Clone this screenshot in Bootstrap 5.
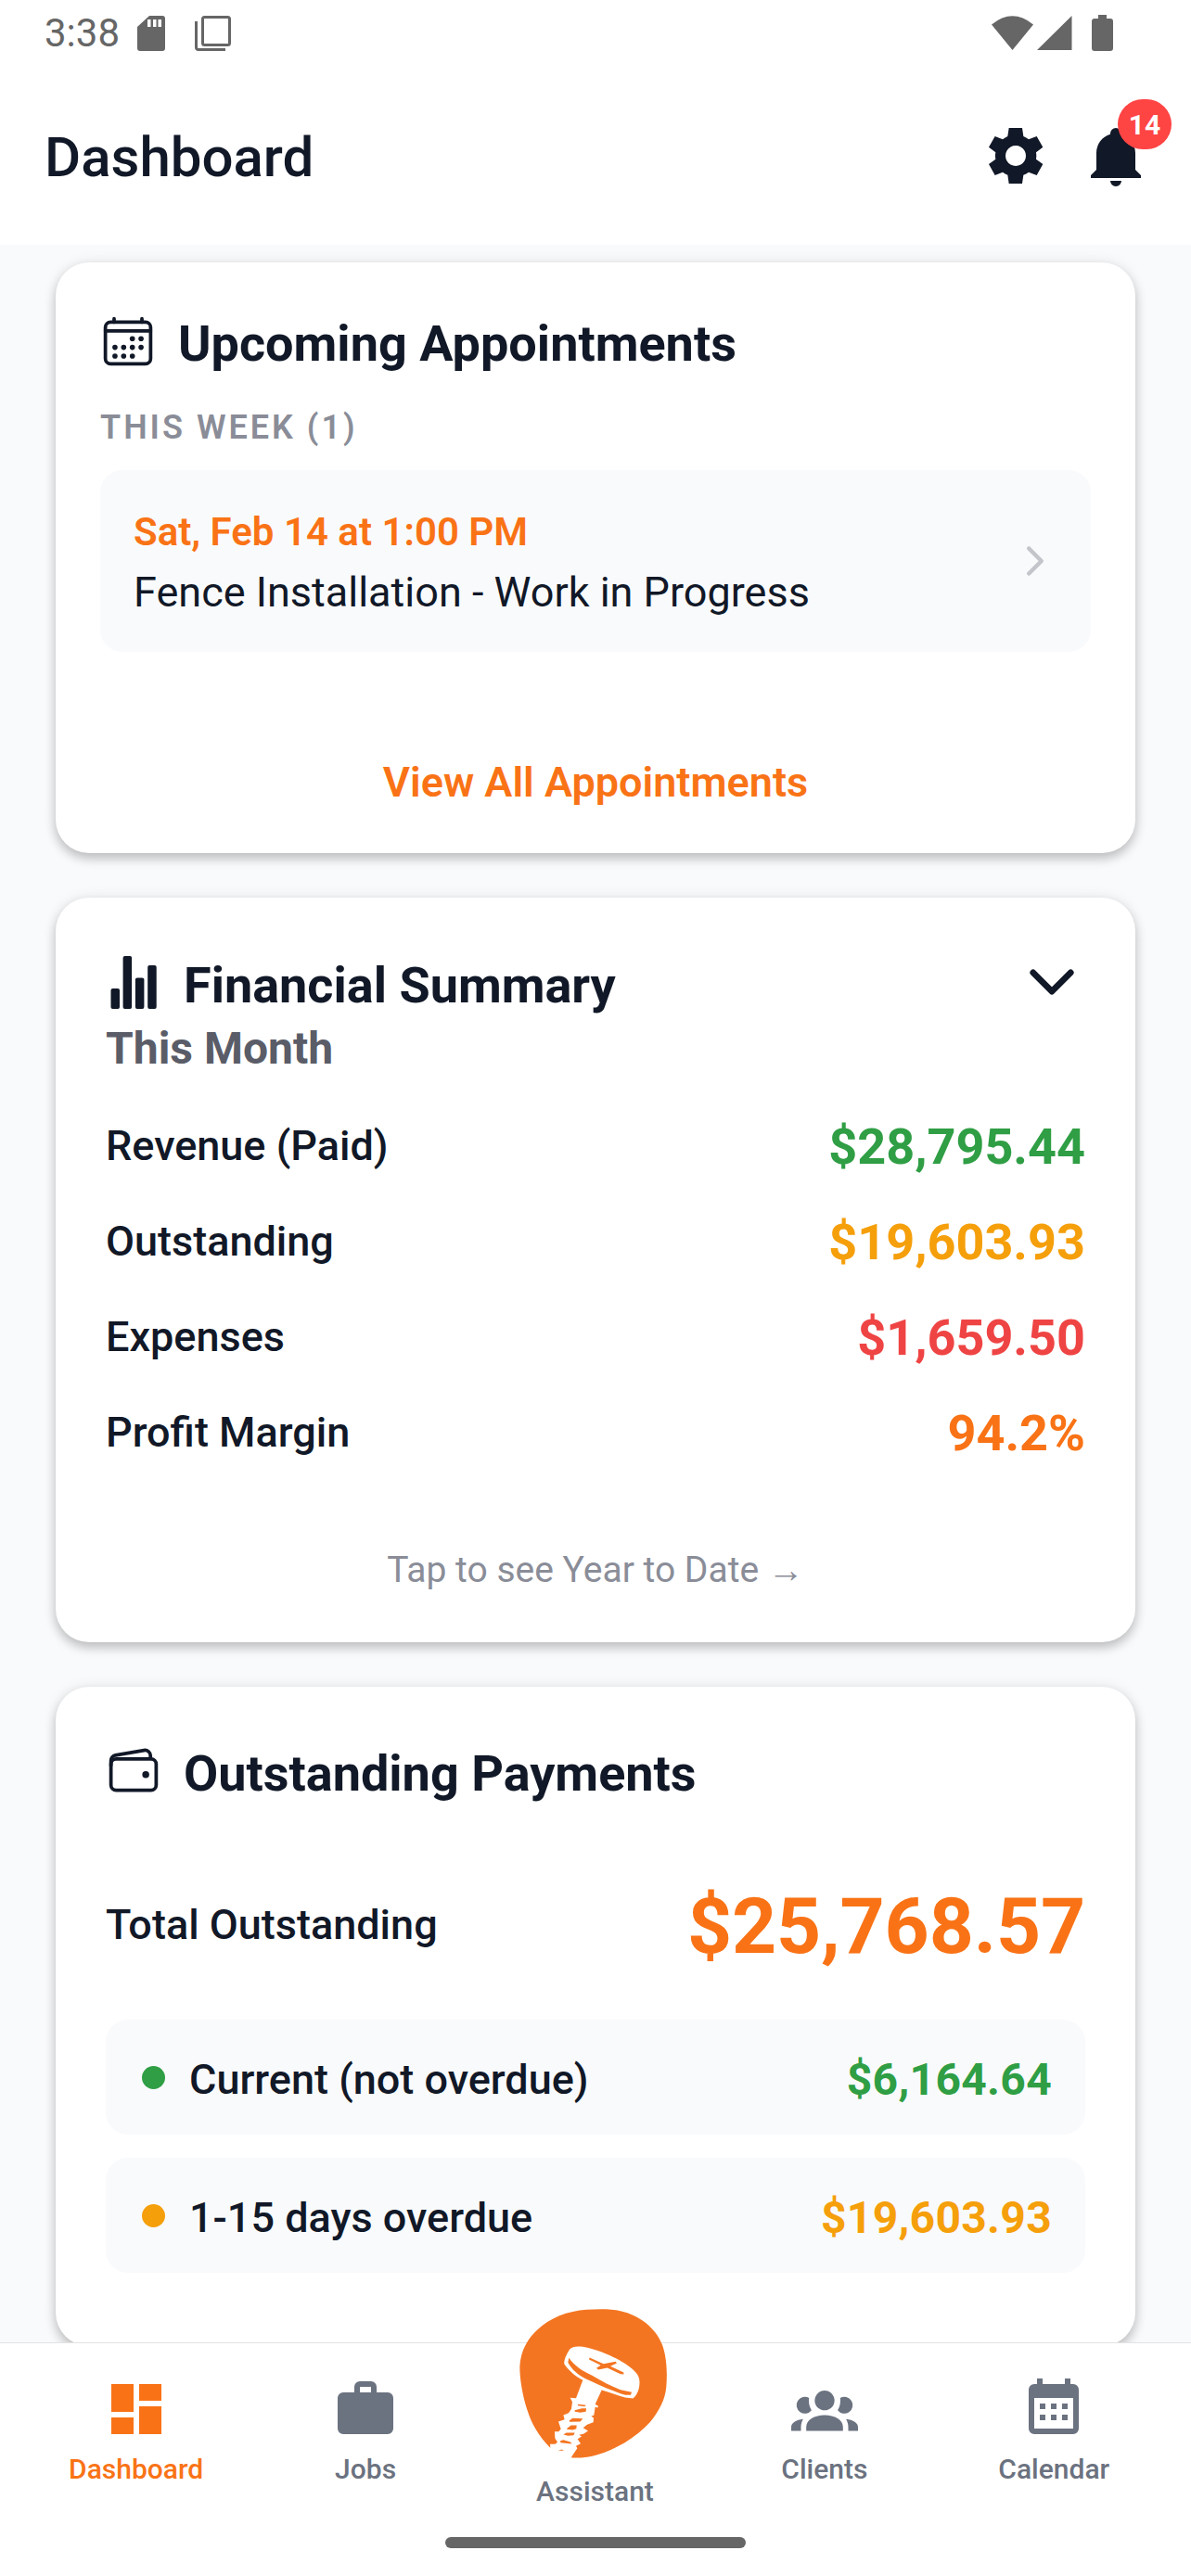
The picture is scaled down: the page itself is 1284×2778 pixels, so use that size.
<!DOCTYPE html>
<html lang="en">
<head>
<meta charset="utf-8">
<meta name="viewport" content="width=device-width, initial-scale=1">
<title>Dashboard</title>
<link href="https://cdn.jsdelivr.net/npm/bootstrap@5.3.0/dist/css/bootstrap.min.css" rel="stylesheet">
<style>
:root{--ink:#111827;--brand:#f97316;--good:#2f9e44;--warn:#f59f0b;--bad:#ef4444;--soft:#f9fafc;--dim:#8a8d98;--nav:#6b7280}
body{font-family:Roboto,"Liberation Sans",sans-serif;color:var(--ink);height:2778px;overflow:hidden;background:#fff}
svg{display:block;flex:none}
.statusbar{height:72px;padding:0 84px 0 48px;color:#666;font-size:42px;line-height:71px}
.status-left{margin:17px 0 0 18px}
.status-right{margin-top:16px}
.topbar{height:192px;padding:0 45px 0 48px}
.topbar h1{font-size:60px;font-weight:500;line-height:72px;padding-top:62px}
.icon-row{padding-top:60px;gap:36px}
.count{top:-25px;left:38px;width:58px;height:54px;border-radius:27px;background:#f44;color:#fff;font-size:30px;font-weight:700;line-height:55px}
main{height:2262px;background:#f9fafc;padding:19px 60px 0;overflow:hidden}
.panel{background:#fff;border:0;border-radius:36px;margin-bottom:48px;flex:none;box-shadow:0 6px 12px rgba(0,0,0,.22),0 0 16px rgba(0,0,0,.07)}
.panel-a{height:637px;padding:55px 48px 0}
.panel-b{height:803px;padding:62px 54px 0}
.panel-c{height:711px;padding:61px 54px 0}
.panel h2{font-size:54px;font-weight:700;line-height:65px;margin:0}
.head{gap:24px}
.week{font-size:36px;font-weight:600;line-height:42px;letter-spacing:3px;color:var(--dim);margin:37px 0 25px}
.tile{background:var(--soft);border-radius:24px}
.appt{padding:37px 36px 33px}
.appt svg{margin-top:-5px}
.when{font-size:42px;font-weight:600;line-height:60px;color:var(--brand);margin-bottom:3px}
.what{font-size:45px;line-height:63px}
.viewall{font-size:45px;font-weight:600;line-height:60px;color:var(--brand);margin-top:111px}
.period{font-size:48px;font-weight:700;line-height:71px;color:#5a5d68}
.toggle{margin-top:-7px}
.figures{margin-top:39px;gap:40px}
.figures>div{height:63px}
.lab{font-size:45px;font-weight:500;line-height:60px}
.figures .lab{padding-bottom:2px}
.figures .val{font-size:54px;font-weight:700;line-height:63px}
.hint{font-size:39px;line-height:46px;color:var(--dim);margin-top:93px}
.total{margin-top:84px;height:98px}
.total .lab{padding-bottom:5px}
.total .val{font-size:84px;font-weight:700;line-height:98px;letter-spacing:-.15px}
.buckets{margin-top:51px;gap:25px}
.bucket{height:124px;padding:0 36px}
.bucket .val{font-size:48px;font-weight:700;padding-top:5px;letter-spacing:.3px}
.bucket .lab{padding-top:5px}
.dot{width:25px;height:25px;border-radius:50%;margin:0 26px 0 3px}
.c-good{color:var(--good)}.c-warn{color:var(--warn)}.c-bad{color:var(--bad)}.c-brand{color:var(--brand)}
.b-good{background:var(--good)}.b-warn{background:var(--warn)}
.tabs{height:252px;border-top:1px solid #e2e3e5;padding:0 23px;background:#fff;position:relative}
.tab{width:247.4px;color:var(--nav);font-size:30px;font-weight:500;line-height:36px;padding-top:35px}
.tab svg{margin-bottom:11px}
.tab.on{color:var(--brand)}
.tab.mid{padding-top:0}
.tab.mid svg{margin:-37px 2px 18px 0}
.pill{left:480px;top:209px;width:324px;height:12px;border-radius:6px;background:#666}
</style>
</head>
<body>
<div class="statusbar d-flex justify-content-between">
  <div class="d-flex"><span>3:38</span>
    <svg class="status-left" width="110" height="39" viewBox="0 0 110 39"><path fill="#666" d="M14 0h14q3 0 3 3v32q0 3-3 3H4q-3 0-3-3V12z"/><path fill="#fff" d="M12 4h3.500v8H12zM18 4h3.500v8H18zM23.500 4H27v8h-3.500z"/><rect x="71.500" y="1.500" width="29" height="30" rx="2" fill="none" stroke="#666" stroke-width="3"/><path d="M64.500 6v28q0 2.500 2.500 2.500h29" fill="none" stroke="#666" stroke-width="3"/></svg>
  </div>
  <svg class="status-right" width="131" height="39" viewBox="0 0 131 39" fill="#666"><path d="M0 10.500Q22.500-8 45 10.500L22.500 38zM49 38L86.500 1v37zM115 0h9v4h4q3 0 3 3v29q0 3-3 3h-17q-3 0-3-3V7q0-3 3-3h4z"/></svg>
</div>
<header class="topbar d-flex justify-content-between">
  <h1 class="m-0">Dashboard</h1>
  <div class="icon-row d-flex">
    <svg width="72" height="72" viewBox="177 396 216 216" fill="#111827"><path fill-rule="evenodd" d="M263 414H306L310 441Q319 445 327 451L353 441L373 476L351 493Q353 504 351 515L373 531L353 567L327 557Q319 563 310 566L306 594H263L259 566Q251 563 243 557L218 567L198 531L220 515Q217 504 220 493L198 476L218 441L243 451Q251 445 259 441ZM285 471a33 33 0 1 0 .1 0z"/></svg>
    <div class="position-relative">
      <svg width="72" height="72" viewBox="0 0 24 24" fill="#111827"><path d="M21 19v1H3v-1l2-2v-6c0-3.100 2.030-5.830 5-6.710V4a2 2 0 0 1 4 0v.29c2.970.88 5 3.610 5 6.710v6l2 2m-7 2a2 2 0 0 1-4 0"/></svg>
      <span class="count position-absolute text-center">14</span>
    </div>
  </div>
</header>
<main class="d-flex flex-column">
  <section class="panel panel-a">
    <div class="head d-flex">
      <svg width="60" height="60" viewBox="0 0 512 512"><g fill="none" stroke="#111827" stroke-width="32" stroke-linejoin="round" stroke-linecap="round"><rect x="48" y="80" width="416" height="384" rx="48"/><path d="M128 48v32M384 48v32M464 160H48"/></g><g fill="#111827"><circle cx="296" cy="232" r="24"/><circle cx="376" cy="232" r="24"/><circle cx="296" cy="312" r="24"/><circle cx="376" cy="312" r="24"/><circle cx="136" cy="312" r="24"/><circle cx="216" cy="312" r="24"/><circle cx="136" cy="392" r="24"/><circle cx="216" cy="392" r="24"/><circle cx="296" cy="392" r="24"/></g></svg>
      <h2>Upcoming Appointments</h2>
    </div>
    <div class="week">THIS WEEK (1)</div>
    <div class="tile appt d-flex justify-content-between align-items-center">
      <div><div class="when">Sat, Feb 14 at 1:00 PM</div><div class="what">Fence Installation - Work in Progress</div></div>
      <svg width="48" height="48" viewBox="0 0 512 512"><path d="M184 112l144 144-144 144" fill="none" stroke="#c3c5ca" stroke-width="48" stroke-linecap="round" stroke-linejoin="round"/></svg>
    </div>
    <div class="viewall text-center">View All Appointments</div>
  </section>
  <section class="panel panel-b">
    <div class="d-flex justify-content-between">
      <div class="head d-flex">
        <svg width="60" height="60" viewBox="0 0 60 60" fill="#111827"><rect x="5.500" y="36" width="9.500" height="22" rx="2"/><rect x="18.600" y="1" width="9.500" height="57" rx="2"/><rect x="31.900" y="24.500" width="9.500" height="33.500" rx="2"/><rect x="45.200" y="11" width="9.500" height="47" rx="2"/></svg>
        <h2>Financial Summary</h2>
      </div>
      <svg class="toggle" width="72" height="72" viewBox="0 0 512 512"><path d="M112 184l144 144 144-144" fill="none" stroke="#111827" stroke-width="48" stroke-linecap="round" stroke-linejoin="round"/></svg>
    </div>
    <div class="period">This Month</div>
    <div class="figures d-flex flex-column">
      <div class="d-flex justify-content-between align-items-center"><span class="lab">Revenue (Paid)</span><span class="val c-good">$28,795.44</span></div>
      <div class="d-flex justify-content-between align-items-center"><span class="lab">Outstanding</span><span class="val c-warn">$19,603.93</span></div>
      <div class="d-flex justify-content-between align-items-center"><span class="lab">Expenses</span><span class="val c-bad">$1,659.50</span></div>
      <div class="d-flex justify-content-between align-items-center"><span class="lab">Profit Margin</span><span class="val c-brand">94.2%</span></div>
    </div>
    <div class="hint text-center">Tap to see Year to Date →</div>
  </section>
  <section class="panel panel-c">
    <div class="head d-flex">
      <svg width="60" height="60" viewBox="0 0 512 512"><g fill="none" stroke="#111827" stroke-width="32" stroke-linejoin="round"><rect x="48" y="144" width="416" height="288" rx="48"/><path d="M411.360 144v-30A50 50 0 0 0 352 64.900L88.640 109.850A50 50 0 0 0 48 159v49"/></g><circle cx="368" cy="288" r="32" fill="#111827"/></svg>
      <h2>Outstanding Payments</h2>
    </div>
    <div class="total d-flex justify-content-between align-items-center"><span class="lab">Total Outstanding</span><span class="val c-brand">$25,768.57</span></div>
    <div class="buckets d-flex flex-column">
      <div class="tile bucket d-flex align-items-center"><span class="dot b-good"></span><span class="lab">Current (not overdue)</span><span class="val c-good ms-auto">$6,164.64</span></div>
      <div class="tile bucket d-flex align-items-center"><span class="dot b-warn"></span><span class="lab">1-15 days overdue</span><span class="val c-warn ms-auto">$19,603.93</span></div>
    </div>
  </section>
</main>
<nav class="tabs d-flex">
  <div class="tab on d-flex flex-column align-items-center"><svg width="72" height="72" viewBox="0 0 24 24" fill="currentColor"><path d="M3 13h8V3H3v10zm0 8h8v-6H3v6zm10 0h8V11h-8v10zm0-18v6h8V3h-8z"/></svg>Dashboard</div>
  <div class="tab d-flex flex-column align-items-center"><svg width="72" height="72" viewBox="0 0 24 24" fill="currentColor"><path d="M10 2h4a2 2 0 0 1 2 2v2h4a2 2 0 0 1 2 2v11a2 2 0 0 1-2 2H4a2 2 0 0 1-2-2V8a2 2 0 0 1 2-2h4V4a2 2 0 0 1 2-2m4 4V4h-4v2h4z"/></svg>Jobs</div>
  <div class="tab mid d-flex flex-column align-items-center">
    <svg width="160" height="161" viewBox="183 59 480 482"><path fill="#f47521" d="M400 61C440 58 480 58 510 65C570 78 625 120 645 175C658 210 662 260 658 310C655 350 635 390 605 425C560 475 490 515 435 530C410 537 390 541 352 540L282 507C245 470 222 430 208 385C192 335 184 285 184 245C186 200 205 160 240 127C280 88 340 65 400 61Z"/>
      <g fill="#fff"><path d="M345 190C354 180 368 178 388 181C440 190 510 220 548 253C570 272 573 285 571 305C569 325 560 340 550 348L525 345C505 340 480 330 449 321L428 367L438 373L436 378L428 376L424 402L415 406L423 411L422 425L402 433L389 443L405 453L390 463L376 466L384 471L371 479L381 494L366 502L370 509L352 536L350 545L270 545L283 508L282 496L299 496L306 489L298 477L297 455L310 455L317 447L309 423L329 416L325 402L342 395L351 382L354 359L347 346L366 347L388 289C370 280 345 262 328 237C326 222 336 205 345 190Z"/></g>
      <g fill="#f47521"><path d="M343 217C360 242 385 259 418 274C450 292 480 310 510 320L546 328L543 337L525 337C485 325 440 304 405 288C375 275 352 255 340 232Z"/><path d="M410 216L455 236L494 229L498 234L477 244L520 264V270L510 269L467 249L438 255L432 250L446 241L408 222Z"/><path d="M372 367L398 370L394 374L372 371ZM362 386L385 380H399L398 391L380 394L362 391ZM344 420L355 412L388 413L380 423L345 424ZM338 444L350 435H368L367 446L355 450L336 448ZM325 465L335 459H362L358 467L340 469ZM315 485L325 482L348 489L352 495L316 491ZM308 517L320 513L327 517Z"/></g></svg>
    Assistant</div>
  <div class="tab d-flex flex-column align-items-center"><svg width="72" height="72" viewBox="0 0 24 24" fill="currentColor"><circle cx="12" cy="8.900" r="3.550"/><path d="M5.400 19.800v-1.300c0-2.700 3-4.300 6.600-4.300s6.600 1.600 6.600 4.300v1.300z"/><path d="M6.400 8a3 3 0 1 0 .9 4.400 6.600 6.600 0 0 1-.9-4.400zM17.600 8a3 3 0 1 1-.9 4.400 6.600 6.600 0 0 0 .9-4.400zM4.300 15.600C1.700 15.900 0 17 0 18.500v1.300h3.500v-1.300c0-1.100.3-2 .8-2.900zM19.700 15.600c2.600.3 4.300 1.400 4.300 2.900v1.300h-3.500v-1.300c0-1.100-.3-2-.8-2.900z"/></svg>Clients</div>
  <div class="tab d-flex flex-column align-items-center"><svg width="72" height="72" viewBox="0 0 24 24" fill="currentColor"><path fill-rule="evenodd" d="M6 1h2v2h8V1h2v2h1a2 2 0 0 1 2 2v14a2 2 0 0 1-2 2H5a2 2 0 0 1-2-2V5a2 2 0 0 1 2-2h1zM5 8v11h14V8z"/><path d="M7 10h2v2H7zm4 0h2v2h-2zm4 0h2v2h-2zM7 14h2v2H7zm4 0h2v2h-2zm4 0h2v2h-2z"/></svg>Calendar</div>
  <div class="pill position-absolute"></div>
</nav>
<script src="https://cdn.jsdelivr.net/npm/bootstrap@5.3.0/dist/js/bootstrap.bundle.min.js"></script>
</body>
</html>
